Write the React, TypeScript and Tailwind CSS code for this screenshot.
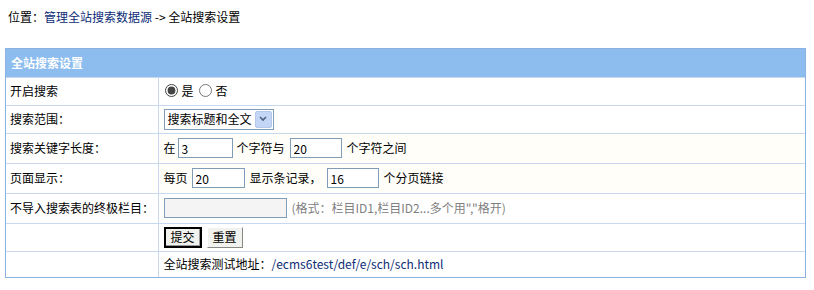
import { useState } from 'react'

const font = { fontFamily: '"Noto Sans CJK SC", "Liberation Sans", sans-serif' }

const Row = ({ label, children }: { label?: string; children: React.ReactNode }) => (
  <tr className="bg-white">
    <td className="border-b border-r border-[#c8d8ee] pl-[4px] h-[28px] w-[152px] align-middle">{label}</td>
    <td className="border-b border-[#c8d8ee] pl-[5px] align-middle">{children}</td>
  </tr>
)

const TextBox = ({ value, w }: { value: string; w: string }) => (
  <input
    defaultValue={value}
    className={`${w} h-[20px] border border-[#7f9db9] bg-white px-[3px] text-[12px] text-black align-middle outline-none`}
  />
)

export default function App() {
  const [open, setOpen] = useState(true)

  return (
    <div className="w-[814px] h-[290px] bg-white text-[12px] text-black leading-none" style={font}>
      {/* breadcrumb */}
      <div className="pl-[8px] pt-[11px] h-[48px]">
        位置：<a href="#" className="text-[#0c2c76]">管理全站搜索数据源</a> -&gt; 全站搜索设置
      </div>

      <div className="ml-[5px] w-[801px] border border-[#8cb2e2]">
        <table className="w-full border-collapse">
          <tbody>
            <tr>
              <td colSpan={2} className="h-[28px] bg-[#8cbdee] pl-[5px] font-bold text-white border-b border-[#c8d8ee]">
                全站搜索设置
              </td>
            </tr>
            <Row label="开启搜索">
              <label className="inline-flex items-center gap-[4px] mr-[5px]">
                <input type="radio" checked={open} onChange={() => setOpen(true)} className="w-[13px] h-[13px] m-0 ml-[1px] accent-[#444]" />
                是
              </label>
              <label className="inline-flex items-center gap-[4px]">
                <input type="radio" checked={!open} onChange={() => setOpen(false)} className="w-[13px] h-[13px] m-0 accent-[#444]" />
                否
              </label>
            </Row>
            <Row label="搜索范围：">
              <div className="inline-flex items-center h-[21px] border border-[#7f9db9] bg-white">
                <span className="px-[3px]">搜索标题和全文</span>
                <span className="w-[17px] h-[17px] mr-[1px] flex items-center justify-center bg-[#c4d6f6] border border-[#b5c8ea] rounded-[2px]">
                  <svg width="8" height="6" viewBox="0 0 8 6">
                    <path d="M1 1 L4 4 L7 1" stroke="#4d6185" strokeWidth="1.6" fill="none" />
                  </svg>
                </span>
              </div>
            </Row>
            <Row label="搜索关键字长度：">
              <div className="flex items-center h-[29px] bg-[#fffef9] -ml-[5px] pl-[5px]">
                <span className="mr-[2px]">在</span>
                <TextBox value="3" w="w-[55px]" />
                <span className="ml-[4px] mr-[5px]">个字符与</span>
                <TextBox value="20" w="w-[52px]" />
                <span className="ml-[5px]">个字符之间</span>
              </div>
            </Row>
            <Row label="页面显示：">
              <div className="flex items-center h-[29px] bg-[#fffef9] -ml-[5px] pl-[5px]">
                <span className="mr-[4px]">每页</span>
                <TextBox value="20" w="w-[53px]" />
                <span className="ml-[5px] mr-[5px]">显示条记录，</span>
                <TextBox value="16" w="w-[52px]" />
                <span className="ml-[5px]">个分页链接</span>
              </div>
            </Row>
            <Row label="不导入搜索表的终极栏目：">
              <div className="flex items-center h-[29px]">
                <input className="w-[123px] h-[20px] border border-[#7f9db9] bg-[#f4f4f4] outline-none" />
                <span className="ml-[5px] text-[#808080]">(格式：栏目ID1,栏目ID2...多个用","格开)</span>
              </div>
            </Row>
            <Row>
              <div className="flex items-center gap-[5px] h-[27px]">
                <button className="h-[21px] px-[5px] border-2 border-black bg-[#f1f1ed] shadow-[inset_-1px_-1px_0_#999]">提交</button>
                <button className="h-[21px] px-[5px] border border-t-white border-l-white border-r-[#888] border-b-[#888] bg-[#f1f1ed]">重置</button>
              </div>
            </Row>
            <tr className="bg-white">
              <td className="border-r border-[#c8d8ee] h-[26px]"></td>
              <td className="pl-[5px]">
                全站搜索测试地址：<a href="#" className="text-[#0c2c76]">/ecms6test/def/e/sch/sch.html</a>
              </td>
            </tr>
          </tbody>
        </table>
      </div>
    </div>
  )
}
